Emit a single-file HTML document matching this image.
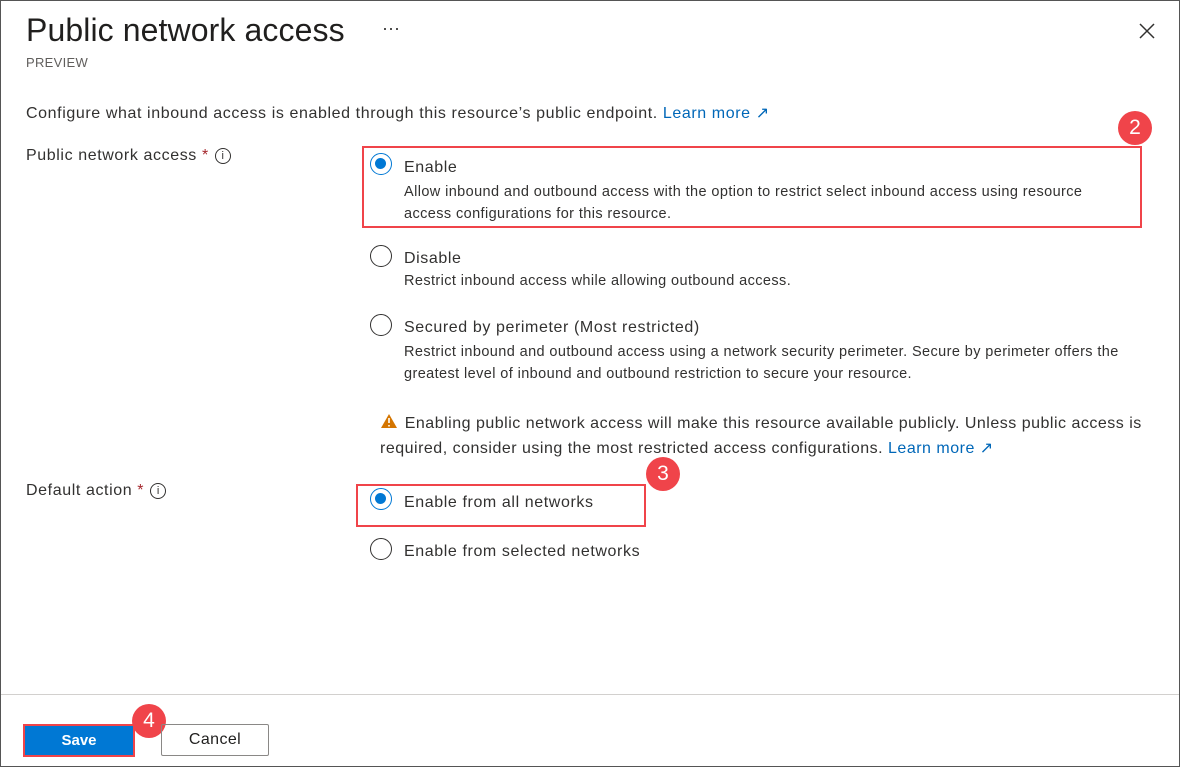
<!DOCTYPE html>
<html><head><style>
*{margin:0;padding:0;box-sizing:border-box}
body{width:1180px;height:767px;background:#fff;font-family:"Liberation Sans",sans-serif;color:#323130;position:relative;overflow:hidden}
.frame{position:absolute;left:0;top:0;width:1180px;height:767px;border:1px solid #555}
.a{position:absolute;white-space:nowrap}
.t15{font-size:16px;letter-spacing:0.6px}
.t13{font-size:14.5px;letter-spacing:0.4px}
.radio{position:absolute;width:22px;height:22px;border:1.5px solid #323130;border-radius:50%}
.radio.on{border-color:#0078d4}
.radio.on:after{content:"";position:absolute;left:4px;top:4px;width:11px;height:11px;border-radius:50%;background:#0078d4}
.red{position:absolute;border:2px solid #f0444a}
.badge{position:absolute;width:34px;height:34px;border-radius:50%;background:#f0444a;color:#fff;font-size:21px;text-align:center;line-height:34px}
a{color:#0067b8;text-decoration:none}
.info{display:inline-block;width:16px;height:16px;border:1.2px solid #323130;border-radius:50%;font-size:11px;text-align:center;line-height:14px;vertical-align:1px;margin-left:6px;letter-spacing:0}
</style></head><body>
<div class="frame"></div>
<div class="a" style="left:26px;top:12px;font-size:32px;letter-spacing:0.1px;color:#201f1e">Public network access</div>
<div class="a" style="left:382px;top:18px;font-size:18px">···</div>
<svg class="a" style="left:1138px;top:22px" width="18" height="18"><path d="M2 2L16 16M16 2L2 16" stroke="#323130" stroke-width="1.5"/></svg>
<div class="a" style="left:26px;top:55px;font-size:13px;letter-spacing:0.3px;color:#605e5c">PREVIEW</div>
<div class="a t15" style="left:26px;top:103px">Configure what inbound access is enabled through this resource’s public endpoint. <a>Learn more ↗</a></div>
<div class="a t15" style="left:26px;top:147px">Public network access <span style="color:#a4262c">*</span><span class="info">i</span></div>
<div class="red" style="left:362px;top:146px;width:780px;height:82px"></div>
<div class="radio on" style="left:370px;top:153px"></div>
<div class="a t15" style="left:404px;top:159px">Enable</div>
<div class="a t13" style="left:404px;top:181px;line-height:22px">Allow inbound and outbound access with the option to restrict select inbound access using resource<br>access configurations for this resource.</div>
<div class="badge" style="left:1118px;top:111px">2</div>
<div class="radio" style="left:370px;top:245px"></div>
<div class="a t15" style="left:404px;top:250px">Disable</div>
<div class="a t13" style="left:404px;top:273px">Restrict inbound access while allowing outbound access.</div>
<div class="radio" style="left:370px;top:314px"></div>
<div class="a t15" style="left:404px;top:319px">Secured by perimeter (Most restricted)</div>
<div class="a t13" style="left:404px;top:341px;line-height:22px">Restrict inbound and outbound access using a network security perimeter. Secure by perimeter offers the<br>greatest level of inbound and outbound restriction to secure your resource.</div>
<svg class="a" style="left:380px;top:413px" width="18" height="16"><path d="M9 1L17 15H1Z" fill="#d47500"/><path d="M9 5v5M9 12v1.5" stroke="#fff" stroke-width="1.6"/></svg>
<div class="a t15" style="left:380px;top:411px;line-height:25px;letter-spacing:0.5px">&nbsp;&nbsp;&nbsp;&nbsp;&nbsp;Enabling public network access will make this resource available publicly. Unless public access is<br>required, consider using the most restricted access configurations. <a>Learn more ↗</a></div>
<div class="a t15" style="left:26px;top:482px">Default action <span style="color:#a4262c">*</span><span class="info">i</span></div>
<div class="red" style="left:356px;top:484px;width:290px;height:43px"></div>
<div class="radio on" style="left:370px;top:488px"></div>
<div class="a t15" style="left:404px;top:494px">Enable from all networks</div>
<div class="badge" style="left:646px;top:457px">3</div>
<div class="radio" style="left:370px;top:538px"></div>
<div class="a t15" style="left:404px;top:543px">Enable from selected networks</div>
<div class="a" style="left:1px;top:694px;width:1178px;height:1px;background:#d2d0ce"></div>
<div class="a" style="left:23px;top:724px;width:112px;height:33px;background:#0078d4;border:2px solid #f0444a;color:#fff;font-weight:bold;font-size:15px;text-align:center;line-height:29px">Save</div>
<div class="badge" style="left:132px;top:704px">4</div>
<div class="a" style="left:161px;top:724px;width:108px;height:32px;border:1px solid #8a8886;border-radius:2px;font-size:16px;letter-spacing:0.4px;text-align:center;line-height:30px;color:#201f1e">Cancel</div>
</body></html>
